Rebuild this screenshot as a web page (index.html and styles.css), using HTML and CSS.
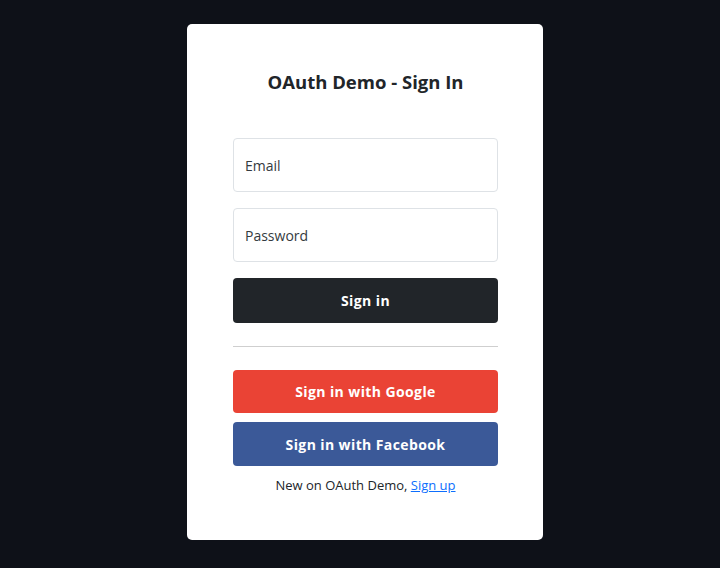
FILE: index.html
```html
<!DOCTYPE html>
<html lang="en">
<head>
<meta charset="utf-8">
<title>OAuth Demo - Sign In</title>
<link rel="stylesheet" href="styles.css">
</head>
<body>
<main class="card">
  <h1 class="title">OAuth Demo - Sign In</h1>
  <form class="form">
    <input class="field" type="email" placeholder="Email">
    <input class="field" type="password" placeholder="Password">
    <button class="btn btn-dark" type="button">Sign in</button>
  </form>
  <hr class="divider">
  <div class="social">
    <button class="btn btn-google" type="button">Sign in with Google</button>
    <button class="btn btn-facebook" type="button">Sign in with Facebook</button>
  </div>
  <p class="footer">New on OAuth Demo, <a href="#" class="link">Sign up</a></p>
</main>
</body>
</html>
```
FILE: styles.css
```css
* { box-sizing: border-box; }
html, body { margin: 0; padding: 0; }
body {
  background: #0e1118;
  font-family: "Open Sans", "Noto Sans", sans-serif;
  color: #212529;
  display: flex;
  justify-content: center;
  padding: 24px 0 0 10px;
  min-height: 568px;
}
.card {
  width: 356px;
  height: 516px;
  background: #fff;
  border-radius: 5px;
  padding: 46px 45px 0 46px;
}
.title {
  margin: 0 0 44px;
  text-align: center;
  font-size: 18.5px;
  line-height: 24px;
  font-weight: 700;
  color: #212529;
}
.form {
  display: flex;
  flex-direction: column;
  gap: 16px;
}
.field {
  height: 54px;
  border: 1px solid #dee2e6;
  border-radius: 4px;
  padding: 0 11px;
  font-family: inherit;
  font-size: 14px;
  color: #212529;
  background: #fff;
  outline: none;
}
.field::placeholder { color: #343a40; opacity: 1; }
.btn {
  display: block;
  width: 100%;
  border: none;
  border-radius: 4px;
  color: #fff;
  font-family: inherit;
  font-size: 14px;
  font-weight: 700;
  letter-spacing: 0.4px;
  cursor: pointer;
}
.btn-dark { height: 45px; background: #212529; }
.divider {
  margin: 23px 0 23px;
  border: none;
  border-top: 1px solid #cfcfcf;
}
.social {
  display: flex;
  flex-direction: column;
  gap: 9px;
}
.btn-google { height: 43px; background: #ea4335; }
.btn-facebook { height: 44px; background: #3b5998; }
.footer {
  margin: 9px 0 0;
  text-align: center;
  font-size: 13px;
  line-height: 21px;
  color: #212529;
}
.link { color: #0d6efd; }
```
